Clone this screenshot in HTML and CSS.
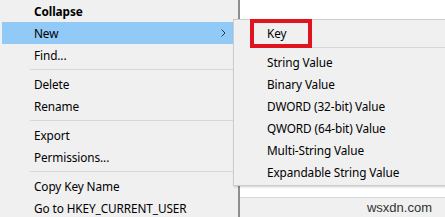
FILE: index.html
```html
<!DOCTYPE html>
<html lang="en">
<head>
  <meta charset="UTF-8">
  <title>Registry Editor - New Key</title>
  <link rel="stylesheet" href="styles.css">
</head>
<body>
  <div class="screen">
    <div class="menu">
      <div class="item bold">Collapse</div>
      <div class="item active">New
        <svg class="chevron" width="5" height="8" viewBox="0 0 5 8"><polyline points="0.5,0.5 4,4 0.5,7.5" fill="none" stroke="#333" stroke-width="1"/></svg>
      </div>
      <div class="item">Find...</div>
      <div class="sep"></div>
      <div class="item">Delete</div>
      <div class="item">Rename</div>
      <div class="sep"></div>
      <div class="item">Export</div>
      <div class="item">Permissions...</div>
      <div class="sep"></div>
      <div class="item">Copy Key Name</div>
      <div class="item">Go to HKEY_CURRENT_USER</div>
    </div>

    <div class="window">
      <div class="list"></div>
      <div class="statusbar">wsxdn.com</div>
    </div>

    <!-- submenu opened from "New" -->
    <div class="submenu">
      <div class="item key">Key<span class="callout"></span></div>
      <div class="sep"></div>
      <div class="item">String Value</div>
      <div class="item">Binary Value</div>
      <div class="item">DWORD (32-bit) Value</div>
      <div class="item">QWORD (64-bit) Value</div>
      <div class="item">Multi-String Value</div>
      <div class="item">Expandable String Value</div>
    </div>
  </div>
</body>
</html>
```

FILE: styles.css
```css
body {
  margin: 0;
  font-family: "Noto Sans", "Open Sans", sans-serif;
  font-size: 11.8px;
  color: #000;
}
.screen {
  position: relative;
  width: 445px;
  height: 217px;
  overflow: hidden;
  display: flex;
  background: #f0f0f0;
}
.menu {
  width: 237px;
  flex: none;
  background: #f0f0f0;
}
.item {
  position: relative;
  height: 22px;
  line-height: 22px;
  margin: 0 2px;
  padding-left: 32px;
  white-space: nowrap;
  letter-spacing: -0.1px;
}
.bold {
  font-weight: bold;
}
.active {
  background: #91c9f7;
}
.chevron {
  position: absolute;
  right: 9px;
  top: 7px;
}
.sep {
  height: 1px;
  margin: 3px 2px 3px 30px;
  background: #d7d7d7;
}
.window {
  flex: 1;
  display: flex;
  flex-direction: column;
  border-left: 2px solid #8e8e8e;
  margin-left: 1px;
}
.list {
  flex: 1;
  background: #fff;
}
.statusbar {
  height: 19px;
  line-height: 19px;
  border-top: 1px solid #d9d9d9;
  background: #f0f0f0;
  text-align: right;
  padding-right: 13px;
  font-family: "Liberation Sans", Arial, sans-serif;
  font-size: 13px;
  color: #333;
}
.submenu {
  position: absolute;
  left: 233px;
  top: 19px;
  width: 240px;
  padding: 2px 0;
  background: #f0f0f0;
  border: 1px solid #cccccc;
  box-shadow: 1px 1px 2px rgba(0, 0, 0, 0.2);
}
.submenu .item {
  padding-left: 31px;
}
.callout {
  position: absolute;
  left: 14px;
  top: -3px;
  width: 62px;
  height: 29px;
  box-sizing: border-box;
  border: 4px solid #e0141e;
}
```
